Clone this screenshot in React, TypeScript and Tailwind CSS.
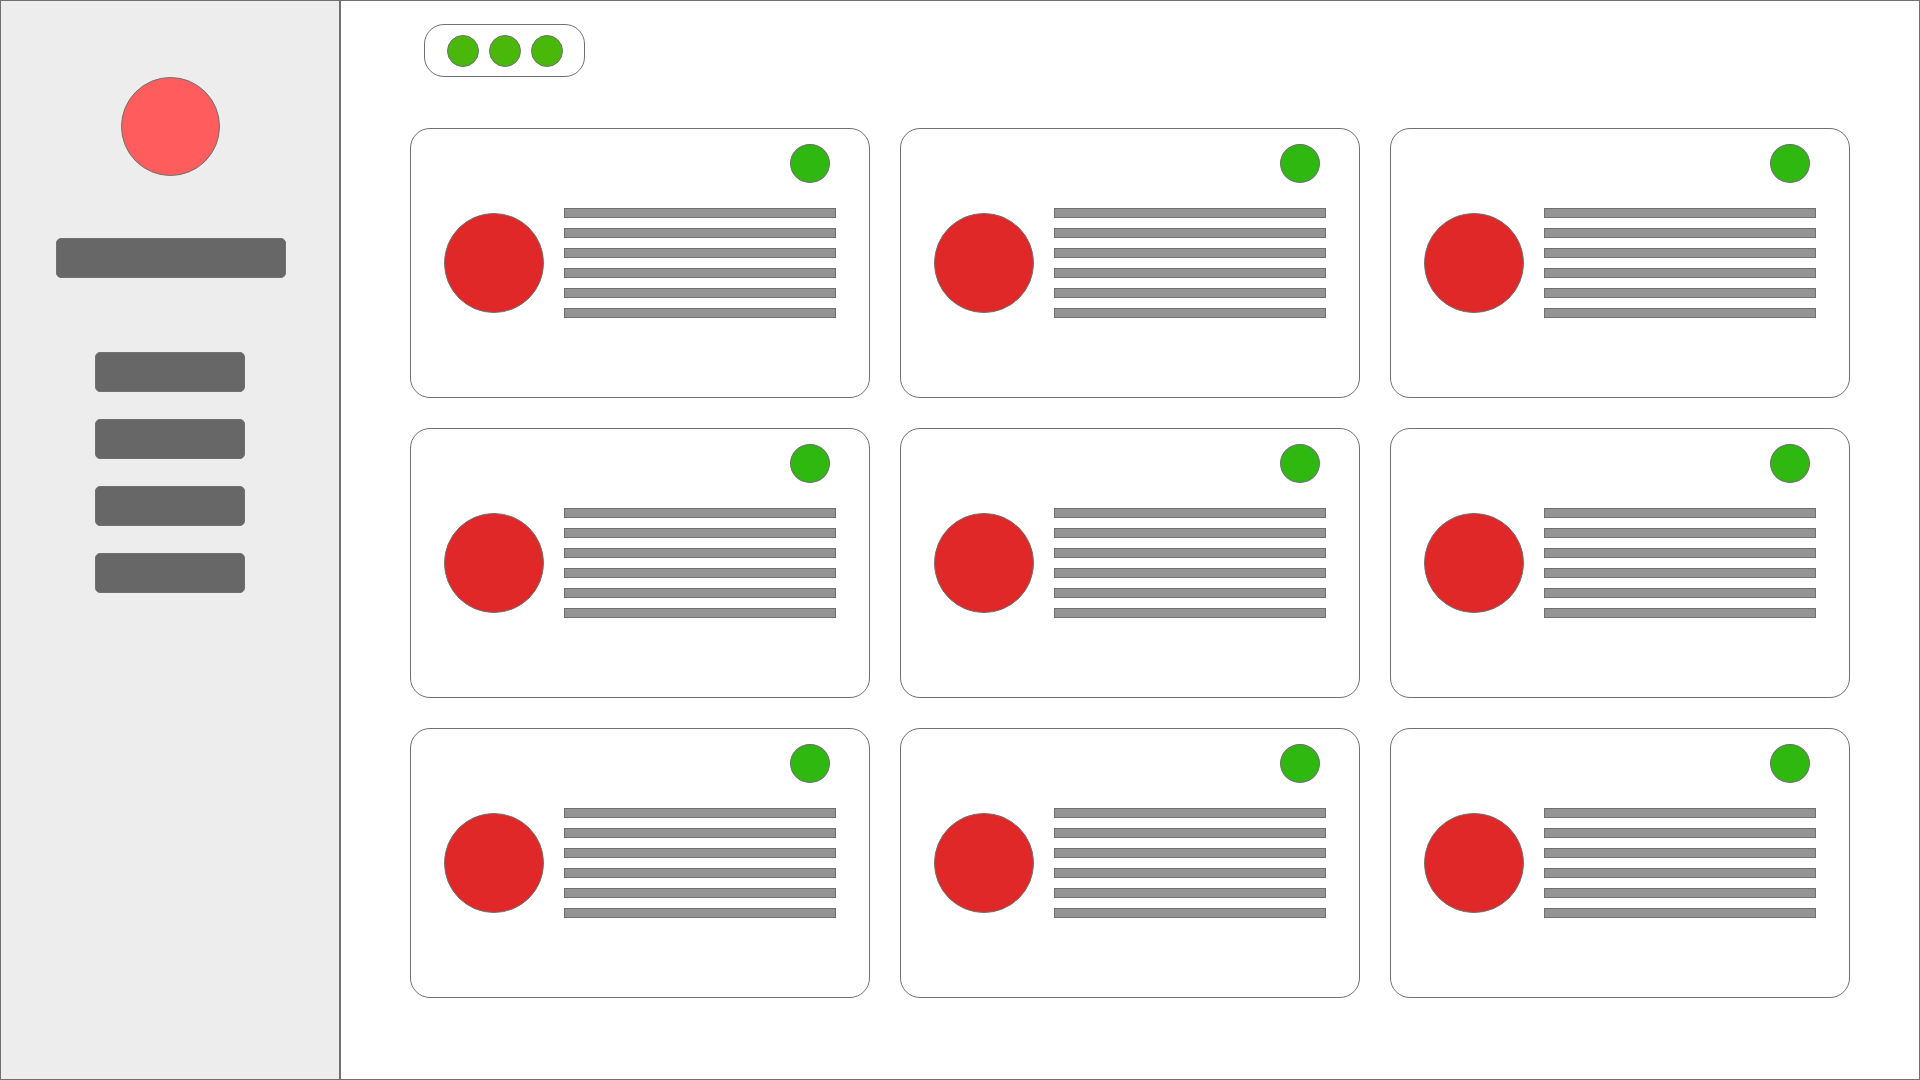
const navItems = ["Overview", "Projects", "Messages", "Settings"];
const actions = ["First action", "Second action", "Third action"];
const cards = [1, 2, 3, 4, 5, 6, 7, 8, 9];
const lines = [1, 2, 3, 4, 5, 6];

function Sidebar() {
  return (
    <aside className="flex w-[341px] shrink-0 flex-col items-center border border-r-2 border-[#707070] bg-[#ededed] pt-[76px]">
      <div className="size-[99px] rounded-full border border-[#707070] bg-[#ff5d5d]" />
      <div className="mt-[62px] mr-[53px] ml-[55px] h-10 self-stretch rounded-[5px] border border-[#707070] bg-[#676767]" />
      <nav className="mt-[74px] flex flex-col gap-[27px]">
        {navItems.map((item) => (
          <a
            key={item}
            href="#"
            aria-label={item}
            className="block h-10 w-[150px] rounded-[5px] border border-[#707070] bg-[#676767]"
          />
        ))}
      </nav>
    </aside>
  );
}

function Toolbar() {
  return (
    <div className="ml-[14px] flex w-fit gap-2.5 rounded-[20px] border border-[#707070] bg-white pt-2.5 pr-[21px] pb-[9px] pl-[22px]">
      {actions.map((action) => (
        <button
          key={action}
          type="button"
          aria-label={action}
          className="size-8 rounded-full border border-[#707070] bg-[#4ab80b]"
        />
      ))}
    </div>
  );
}

function Card({ id }: { id: number }) {
  return (
    <article className="flex flex-col rounded-[20px] border border-[#707070] bg-white px-[33px] pt-[15px] pb-[79px]">
      <button
        type="button"
        aria-label={`Card ${id} status`}
        className="mr-1.5 h-[39px] w-10 self-end rounded-[50%] border border-[#707070] bg-[#2fb80f]"
      />
      <div className="mt-[25px] flex items-center gap-5">
        <div className="size-[100px] shrink-0 rounded-full border border-[#707070] bg-[#e02828]" />
        <div className="flex grow flex-col gap-2.5">
          {lines.map((line) => (
            <div key={line} className="h-2.5 border border-[#707070] bg-[#949494]" />
          ))}
        </div>
      </div>
    </article>
  );
}

export default function App() {
  return (
    <div className="flex min-h-screen bg-white">
      <Sidebar />
      <main className="grow border border-l-0 border-[#707070] px-[69px] pt-[23px] pb-[51px]">
        <Toolbar />
        <section className="mt-[51px] grid grid-cols-3 gap-[30px]">
          {cards.map((id) => (
            <Card key={id} id={id} />
          ))}
        </section>
      </main>
    </div>
  );
}
